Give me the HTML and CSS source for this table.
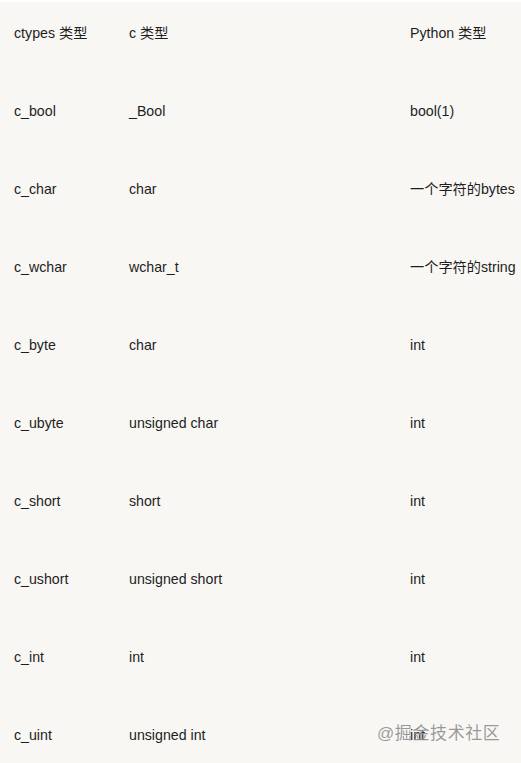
FILE: index.html
```html
<!DOCTYPE html>
<html>
<head>
<meta charset="utf-8">
<link rel="stylesheet" href="styles.css">
</head>
<body>
<div class="page">
  <table class="types">
    <tr class="head"><td>ctypes 类型</td><td>c 类型</td><td>Python 类型</td></tr>
    <tr><td>c_bool</td><td>_Bool</td><td>bool(1)</td></tr>
    <tr><td>c_char</td><td>char</td><td>一个字符的bytes</td></tr>
    <tr><td>c_wchar</td><td>wchar_t</td><td>一个字符的string</td></tr>
    <tr><td>c_byte</td><td>char</td><td>int</td></tr>
    <tr><td>c_ubyte</td><td>unsigned char</td><td>int</td></tr>
    <tr><td>c_short</td><td>short</td><td>int</td></tr>
    <tr><td>c_ushort</td><td>unsigned short</td><td>int</td></tr>
    <tr><td>c_int</td><td>int</td><td>int</td></tr>
    <tr><td>c_uint</td><td>unsigned int</td><td>int</td></tr>
  </table>
  <div class="watermark">@掘金技术社区</div>
</div>
</body>
</html>
```
FILE: styles.css
```css
html, body {
  margin: 0;
  padding: 0;
  background: #ffffff;
}
.page {
  margin-top: 2px;
  width: 521px;
  height: 761px;
  background: #f8f7f4;
  overflow: hidden;
  position: relative;
  font-family: "Liberation Sans", Arial, "Noto Sans CJK SC", sans-serif;
  font-size: 14.2px;
  color: #1e1e1e;
}
.types {
  border-collapse: collapse;
  width: 521px;
  table-layout: fixed;
}
.types td {
  padding: 29px 0 29px 0;
  line-height: 20px;
  white-space: nowrap;
  vertical-align: middle;
}
.types td:nth-child(1) { width: 115px; padding-left: 14px; }
.types td:nth-child(2) { width: 281px; }
.types td:nth-child(3) { width: auto; }
.types tr.head td {
  padding-top: 21px;
}
.watermark {
  position: absolute;
  left: 377px;
  top: 720px;
  font-size: 17px;
  line-height: 24px;
  color: rgba(120, 120, 120, 0.75);
  letter-spacing: 0.6px;
  text-shadow: 0 0 1px rgba(255,255,255,0.6);
}
```
